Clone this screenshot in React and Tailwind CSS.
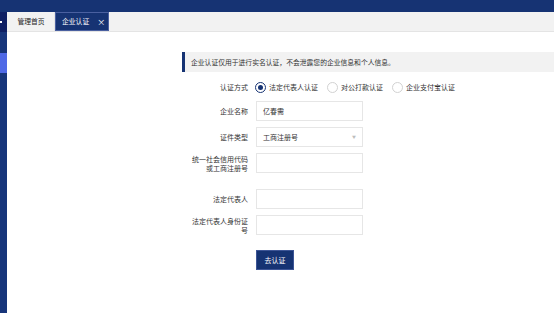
import React from 'react';

const navy = 'bg-[#163373]';

const Label = ({ children }) => (
  <div className="w-[66px] shrink-0 text-right text-[7px] leading-[9px] text-[#333]">{children}</div>
);

const Input = ({ value }) => (
  <div className="w-[107px] h-[20px] border border-[#e6e6e6] bg-white flex items-center px-[6px] text-[7px] text-[#333]">
    {value}
  </div>
);

const Radio = ({ checked, label }) => (
  <div className="flex items-center gap-[3px]">
    <span
      className={
        checked
          ? 'w-[11px] h-[11px] rounded-full border border-[#163373] flex items-center justify-center'
          : 'w-[11px] h-[11px] rounded-full border border-[#d2d2d2]'
      }
    >
      {checked && <span className="w-[5px] h-[5px] rounded-full bg-[#163373]" />}
    </span>
    <span className="text-[7px] text-[#333]">{label}</span>
  </div>
);

const App = () => {
  return (
    <div
      className="w-[554px] h-[313px] flex flex-col bg-white overflow-hidden"
      style={{ fontFamily: '"Noto Sans CJK SC", "Noto Sans", sans-serif' }}
    >
      {/* top bar */}
      <div className={`h-[12px] ${navy}`} />

      <div className="flex flex-1">
        {/* sidebar */}
        <div className="w-[7px] flex flex-col bg-[#17357a]">
          <div className="h-[20px] bg-[#0e1f63] flex items-center">
            <span className="w-[2px] h-[2px] bg-white" />
          </div>
          <div className="h-[21px]" />
          <div className="h-[20px] bg-[#4f69e6]" />
        </div>

        <div className="flex-1 flex flex-col">
          {/* tabs */}
          <div className="h-[20px] bg-[#f2f2f2] border-b border-[#e4e4e4] flex pl-[1px]">
            <div className="w-[47px] flex items-center justify-center text-[6.8px] text-[#222] border-r border-[#e4e4e4]">
              管理首页
            </div>
            <div className={`w-[54px] ${navy} border border-[#4a60a0] flex items-center gap-[8px] pl-[6px] text-[6.8px] text-white`}>
              <span>企业认证</span>
              <span className="text-[8px]">×</span>
            </div>
          </div>

          {/* content */}
          <div className="pl-[175px] pt-[20px] flex flex-col">
            <div className="h-[20px] bg-[#f2f2f2] border-l-[3px] border-[#163373] flex items-center pl-[6px] text-[6.8px] text-[#333]">
              企业认证仅用于进行实名认证，不会泄露您的企业信息和个人信息。
            </div>

            <div className="flex items-center gap-[8px] mt-[8px] h-[14px]">
              <Label>认证方式</Label>
              <div className="flex items-center gap-[9px] -ml-[1px]">
                <Radio checked label="法定代表人认证" />
                <Radio label="对公打款认证" />
                <Radio label="企业支付宝认证" />
              </div>
            </div>

            <div className="flex items-center gap-[8px] mt-[7px]">
              <Label>企业名称</Label>
              <Input value="亿春需" />
            </div>

            <div className="flex items-center gap-[8px] mt-[6px]">
              <Label>证件类型</Label>
              <div className="w-[107px] h-[20px] border border-[#e6e6e6] bg-white flex items-center justify-between pl-[6px] pr-[6px] text-[7px] text-[#333]">
                <span>工商注册号</span>
                <span className="text-[4px] text-[#bdbdbd]">▼</span>
              </div>
            </div>

            <div className="flex items-start gap-[8px] mt-[6px]">
              <div className="pt-[2px]">
                <Label>统一社会信用代码<br />或工商注册号</Label>
              </div>
              <Input value="" />
            </div>

            <div className="flex items-center gap-[8px] mt-[16px]">
              <Label>法定代表人</Label>
              <Input value="" />
            </div>

            <div className="flex items-start gap-[8px] mt-[6px]">
              <div className="pt-[2px]">
                <Label>法定代表人身份证<br />号</Label>
              </div>
              <Input value="" />
            </div>

            <div className="flex mt-[15px] pl-[74px]">
              <button className={`w-[38px] h-[20px] ${navy} border border-[#3d5596] text-white text-[7px] flex items-center justify-center`}>
                去认证
              </button>
            </div>
          </div>
        </div>
      </div>
    </div>
  );
};

export default App;
